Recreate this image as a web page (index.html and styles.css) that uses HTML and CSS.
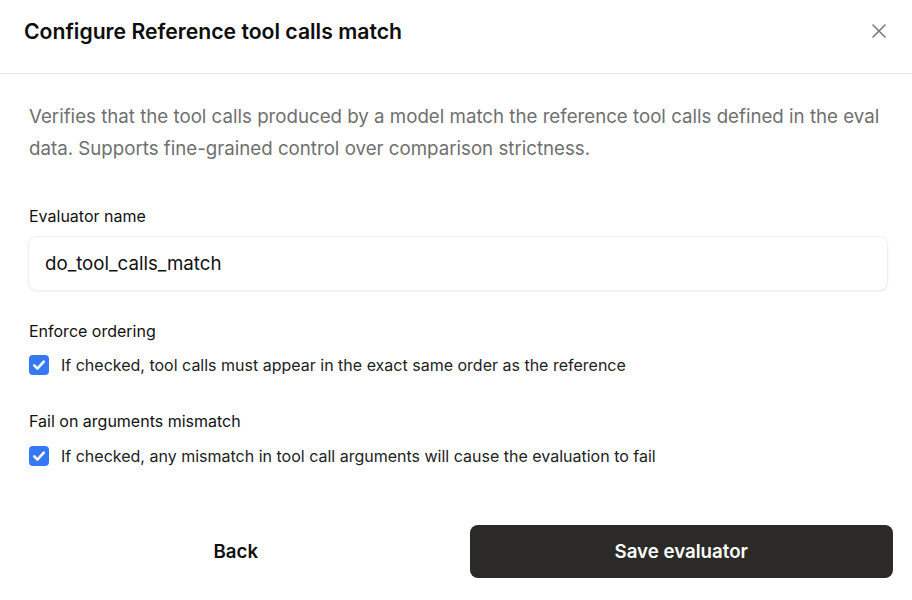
FILE: index.html
```html
<!DOCTYPE html>
<html>
<head>
<meta charset="utf-8">
<link rel="stylesheet" href="styles.css">
</head>
<body>
<div class="dialog">
  <header class="header">
    <h1 class="title">Configure Reference tool calls match</h1>
    <button class="close" aria-label="Close">
      <svg width="14" height="14" viewBox="0 0 14 14"><path d="M1 1L13 13M13 1L1 13" stroke="#7a7a7a" stroke-width="1.6" stroke-linecap="round"/></svg>
    </button>
  </header>
  <main class="body">
    <p class="desc">Verifies that the tool calls produced by a model match the reference tool calls defined in the eval data. Supports fine-grained control over comparison strictness.</p>
    <div class="field">
      <div class="label">Evaluator name</div>
      <div class="input">do_tool_calls_match</div>
    </div>
    <div class="field check-field">
      <div class="label">Enforce ordering</div>
      <div class="check-row">
        <span class="checkbox"><svg width="20" height="20" viewBox="0 0 20 20"><path d="M5.2 10.4L8.4 13.6L14.8 6.6" fill="none" stroke="#fff" stroke-width="2.6" stroke-linecap="round" stroke-linejoin="round"/></svg></span>
        <span class="check-text">If checked, tool calls must appear in the exact same order as the reference</span>
      </div>
    </div>
    <div class="field check-field">
      <div class="label">Fail on arguments mismatch</div>
      <div class="check-row">
        <span class="checkbox"><svg width="20" height="20" viewBox="0 0 20 20"><path d="M5.2 10.4L8.4 13.6L14.8 6.6" fill="none" stroke="#fff" stroke-width="2.6" stroke-linecap="round" stroke-linejoin="round"/></svg></span>
        <span class="check-text">If checked, any mismatch in tool call arguments will cause the evaluation to fail</span>
      </div>
    </div>
  </main>
  <footer class="footer">
    <button class="btn btn-back">Back</button>
    <button class="btn btn-save">Save evaluator</button>
  </footer>
</div>
</body>
</html>
```

FILE: styles.css
```css
* { box-sizing: border-box; }
html, body {
  margin: 0;
  padding: 0;
  background: #fff;
  font-family: Inter, "Noto Sans", sans-serif;
  color: #111;
}
.dialog {
  width: 912px;
  height: 600px;
  display: flex;
  flex-direction: column;
}
.header {
  height: 74px;
  border-bottom: 1px solid #e8e8e8;
  display: flex;
  align-items: center;
  justify-content: space-between;
  padding: 0 24px 12px 24px;
}
.title {
  margin: 0;
  font-size: 21.2px;
  font-weight: 600;
  color: #0d0d0d;
}
.close {
  border: none;
  background: none;
  padding: 0;
  width: 14px;
  height: 14px;
  display: flex;
  margin-right: 2px;
  cursor: pointer;
}
.body {
  padding: 0 25px 0 29px;
}
.desc {
  margin: 27px 0 0 0;
  font-size: 18.7px;
  line-height: 32px;
  color: #6f6f6f;
}
.field {
  margin-top: 40px;
}
.label {
  font-size: 16px;
  line-height: 22px;
  color: #111;
}
.input {
  margin-top: 10px;
  height: 53px;
  border-radius: 8px;
  box-shadow: 0 0 0 1px #f1f1f1, 0 1px 3px rgba(0,0,0,0.12);
  display: flex;
  align-items: center;
  padding: 0 16px;
  font-size: 18.7px;
  color: #111;
}
.check-field { margin-top: 30px; }
.check-field + .check-field { margin-top: 35px; }
.check-row {
  margin-top: 13px;
  display: flex;
  align-items: center;
  gap: 12px;
}
.check-field + .check-field .check-row { margin-top: 14px; }
.checkbox {
  width: 20px;
  height: 20px;
  border-radius: 4px;
  background: #3478f6;
  display: flex;
  flex: none;
}
.check-text {
  font-size: 16px;
  color: #222;
}
.footer {
  margin-top: auto;
  display: flex;
  gap: 22px;
  padding: 0 19px 22px 24px;
}
.btn {
  flex: 1;
  height: 53px;
  border: none;
  border-radius: 8px;
  font-family: Inter, "Noto Sans", sans-serif;
  font-size: 18.7px;
  font-weight: 600;
  cursor: pointer;
}
.btn-back {
  background: #fff;
  color: #111;
}
.btn-save {
  background: #2c2a27;
  color: #fff;
}
```
